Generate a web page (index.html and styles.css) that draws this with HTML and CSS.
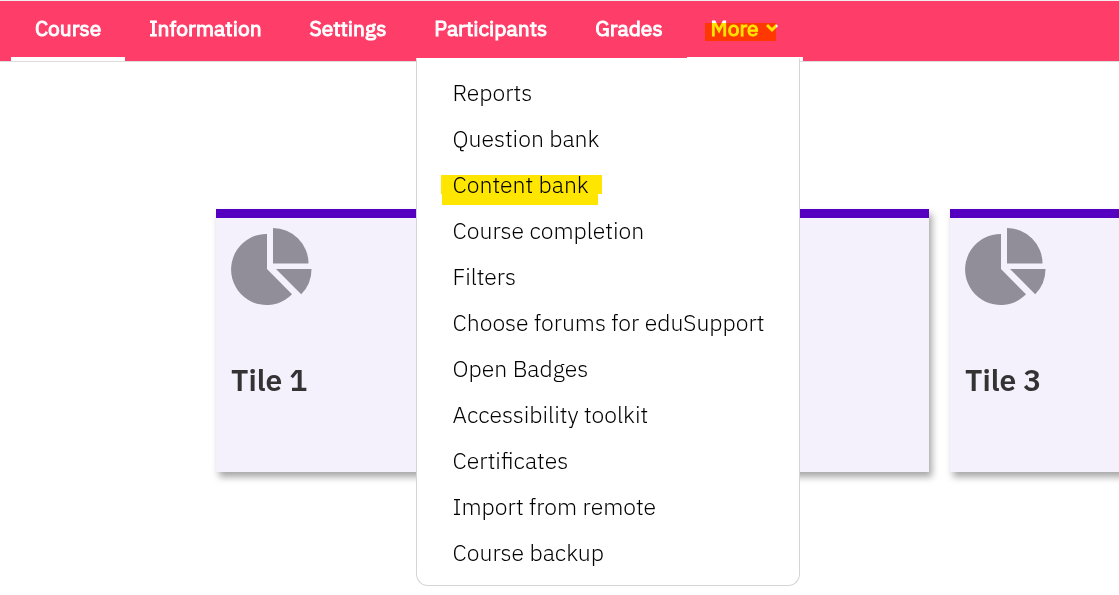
FILE: index.html
```html
<!DOCTYPE html>
<html lang="en">
<head>
  <meta charset="UTF-8">
  <meta name="viewport" content="width=device-width, initial-scale=1.0">
  <title>Course</title>
  <link rel="stylesheet" href="styles.css">
</head>
<body>
  <!-- Course navigation -->
  <nav class="course-nav">
    <ul class="nav-list">
      <li class="nav-item active"><a class="nav-link" href="#">Course</a></li>
      <li class="nav-item"><a class="nav-link" href="#">Information</a></li>
      <li class="nav-item"><a class="nav-link" href="#">Settings</a></li>
      <li class="nav-item"><a class="nav-link" href="#">Participants</a></li>
      <li class="nav-item"><a class="nav-link" href="#">Grades</a></li>
      <li class="nav-item active">
        <button class="nav-link more" type="button" aria-expanded="true">
          More
          <svg class="chevron" viewBox="0 0 14 10" aria-hidden="true"><path d="M2 2l5 5 5-5"/></svg>
        </button>
        <ul class="dropdown">
          <li><a class="dropdown-link" href="#">Reports</a></li>
          <li><a class="dropdown-link" href="#">Question bank</a></li>
          <li><a class="dropdown-link marked" href="#">Content bank</a></li>
          <li><a class="dropdown-link" href="#">Course completion</a></li>
          <li><a class="dropdown-link" href="#">Filters</a></li>
          <li><a class="dropdown-link" href="#">Choose forums for eduSupport</a></li>
          <li><a class="dropdown-link" href="#">Open Badges</a></li>
          <li><a class="dropdown-link" href="#">Accessibility toolkit</a></li>
          <li><a class="dropdown-link" href="#">Certificates</a></li>
          <li><a class="dropdown-link" href="#">Import from remote</a></li>
          <li><a class="dropdown-link" href="#">Course backup</a></li>
        </ul>
      </li>
    </ul>
  </nav>

  <!-- Tiles -->
  <main class="tiles">
    <section class="tile">
      <svg class="tile-icon" viewBox="0 0 82 78" aria-hidden="true">
        <path d="M36 41V6A35.500 35.500 0 1 0 61 66.300Z"/>
        <path d="M42 0A35.500 35.500 0 0 1 77.500 35.500H42Z"/>
        <path d="M45 41H80.500A35.500 35.500 0 0 1 70.200 66.300Z"/>
      </svg>
      <h2 class="tile-title">Tile 1</h2>
    </section>
    <section class="tile"></section>
    <section class="tile">
      <svg class="tile-icon" viewBox="0 0 82 78" aria-hidden="true">
        <path d="M36 41V6A35.500 35.500 0 1 0 61 66.300Z"/>
        <path d="M42 0A35.500 35.500 0 0 1 77.500 35.500H42Z"/>
        <path d="M45 41H80.500A35.500 35.500 0 0 1 70.200 66.300Z"/>
      </svg>
      <h2 class="tile-title">Tile 3</h2>
    </section>
  </main>
</body>
</html>
```

FILE: styles.css
```css
* {
  box-sizing: border-box;
}

body {
  margin: 0;
  min-height: 100vh;
  background: #fff;
  font-family: "IBM Plex Sans", Roboto, sans-serif;
}

ul {
  list-style: none;
  margin: 0;
  padding: 0;
}

/* Navigation bar */
.course-nav {
  background: #ff3d69;
  border-top: 1px solid #eee;
  border-bottom: 1px solid #ddd;
  padding-left: 11px;
}

.nav-list {
  display: flex;
}

.nav-item {
  position: relative;
}

.nav-link {
  display: flex;
  align-items: center;
  gap: 6px;
  height: 60px;
  padding: 0 24px 2px;
  border: 0;
  border-bottom: 4px solid transparent;
  background: none;
  color: #fff;
  font-family: inherit;
  font-size: 21px;
  font-weight: 400;
  -webkit-text-stroke: 1px #fff;
  line-height: 28px;
  text-decoration: none;
}

.active .nav-link {
  border-bottom-color: #fff;
}

.chevron {
  width: 14px;
  height: 10px;
  fill: none;
  stroke: #fff;
  stroke-width: 3;
}

/* Highlighter marks */
.more::after,
.marked::after {
  content: "";
  position: absolute;
  mix-blend-mode: multiply;
}

.more::after {
  top: 22px;
  left: 18px;
  right: 27px;
  height: 18px;
  background: #ffe600;
}

.marked::after {
  top: 14px;
  left: 24px;
  width: 161px;
  height: 30px;
  background:
    linear-gradient(#ffe600, #ffe600) 0 0 / 161px 19px no-repeat,
    linear-gradient(#ffe600, #ffe600) 1px 19px / 156px 11px no-repeat;
}

/* More menu */
.dropdown {
  position: absolute;
  top: 57px;
  right: 3px;
  z-index: 1;
  padding: 10px 0;
  border: 1px solid #d5d5d5;
  border-top-color: #fff;
  border-radius: 0 0 12px 12px;
  background: #fff;
}

.dropdown-link {
  display: block;
  position: relative;
  padding: 9px 34px 9px 36px;
  color: #000;
  font-size: 23px;
  font-weight: 300;
  line-height: 28px;
  text-decoration: none;
  white-space: nowrap;
}

/* Tiles */
.tiles {
  display: flex;
  gap: 21px;
  padding: 147px 0 40px 216px;
  overflow: hidden;
}

.tile {
  flex: none;
  width: 346px;
  min-height: 263px;
  padding: 10px 15px;
  border-top: 9px solid #5500c0;
  background: #f4f1fc;
  box-shadow: 3px 5px 7px rgba(0, 0, 0, 0.35);
}

.tile-icon {
  display: block;
  width: 82px;
  height: 78px;
  fill: #928e99;
}

.tile-title {
  margin: 56px 0 0;
  color: #333;
  font-size: 30px;
  font-weight: 600;
  line-height: 36px;
}
```
